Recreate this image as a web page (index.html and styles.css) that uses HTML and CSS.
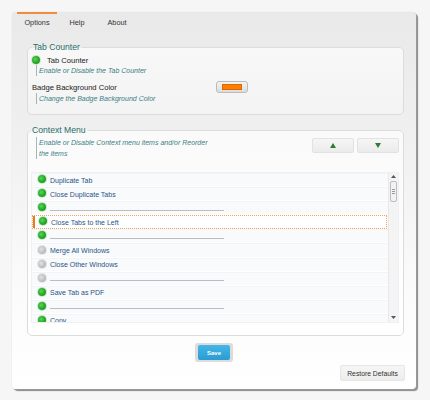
FILE: index.html
```html
<!DOCTYPE html>
<html>
<head>
<meta charset="utf-8">
<link rel="stylesheet" href="styles.css">
</head>
<body>
<div class="panel">
  <div class="tabs">
    <div class="tab active">Options</div>
    <div class="tab">Help</div>
    <div class="tab">About</div>
  </div>

  <fieldset class="group g1">
    <legend>Tab Counter</legend>
    <div class="opt"><span class="dot on"></span><span class="opt-label">Tab Counter</span></div>
    <div class="desc">Enable or Disable the Tab Counter</div>
    <div class="badge-row">
      <div class="badge-text">
        <div class="label">Badge Background Color</div>
        <div class="desc">Change the Badge Background Color</div>
      </div>
      <div class="swatch"><span class="swatch-fill"></span></div>
    </div>
  </fieldset>

  <fieldset class="group g2">
    <legend>Context Menu</legend>
    <div class="cm-head">
      <div class="desc wide">Enable or Disable Context menu items and/or Reorder the items</div>
      <div class="arrows">
        <button class="arrow"><svg width="6" height="5" viewBox="0 0 6 5"><polygon points="3,0 6,5 0,5" fill="#2e7d32"/></svg></button>
        <button class="arrow"><svg width="6" height="5" viewBox="0 0 6 5"><polygon points="0,0 6,0 3,5" fill="#2e7d32"/></svg></button>
      </div>
    </div>
    <div class="listbox">
      <ul class="list">
        <li class="row"><span class="dot on"></span><span class="item">Duplicate Tab</span></li>
        <li class="row"><span class="dot on"></span><span class="item">Close Duplicate Tabs</span></li>
        <li class="row sep"><span class="dot on"></span><span class="rule"></span></li>
        <li class="row selected"><span class="dot on"></span><span class="item">Close Tabs to the Left</span></li>
        <li class="row sep"><span class="dot on"></span><span class="rule"></span></li>
        <li class="row"><span class="dot off"></span><span class="item">Merge All Windows</span></li>
        <li class="row"><span class="dot off"></span><span class="item">Close Other Windows</span></li>
        <li class="row sep"><span class="dot off"></span><span class="rule"></span></li>
        <li class="row"><span class="dot on"></span><span class="item">Save Tab as PDF</span></li>
        <li class="row sep"><span class="dot on"></span><span class="rule"></span></li>
        <li class="row"><span class="dot on"></span><span class="item">Copy</span></li>
      </ul>
      <div class="scrollbar">
        <svg class="sb-arrow" width="5" height="3" viewBox="0 0 5 3"><polygon points="2.5,0 5,3 0,3" fill="#555"/></svg>
        <div class="thumb"><span></span><span></span><span></span></div>
        <div class="track"></div>
        <svg class="sb-arrow" width="5" height="3" viewBox="0 0 5 3"><polygon points="0,0 5,0 2.5,3" fill="#555"/></svg>
      </div>
    </div>
  </fieldset>

  <div class="save-wrap"><button class="save"><span class="save-inner">Save</span></button></div>
  <div class="restore-wrap"><button class="restore">Restore Defaults</button></div>
</div>
</body>
</html>
```

FILE: styles.css
```css
* { box-sizing: border-box; }
html, body { margin: 0; padding: 0; }
body {
  background: #f6f6f6;
  font-family: "Liberation Sans", Arial, sans-serif;
  width: 430px;
  height: 400px;
  overflow: hidden;
}
.panel {
  margin: 12px 0 0 12px;
  width: 404px;
  height: 377px;
  border-radius: 4px;
  background: linear-gradient(to bottom, #e9e9e9 0%, #efefef 30%, #fbfbfb 75%, #ffffff 100%);
  box-shadow: 1px 1px 0 #999, 2px 2px 1px #888, 0 0 1px #ccc;
  display: flex;
  flex-direction: column;
}
.tabs {
  display: flex;
  height: 20px;
  padding-left: 5px;
}
.tab {
  width: 40px;
  font-size: 7.3px;
  color: #333;
  text-align: center;
  line-height: 18px;
  border-top: 2px solid transparent;
}
.tab.active { border-top-color: #f08a3c; }

.group {
  margin: 10px 12px 0 15px;
  border: 1px solid #dcdcdc;
  border-radius: 5px;
  padding: 0 4px 0 4px;
  min-width: 0;
}
.group legend {
  font-size: 8.6px;
  line-height: 10px;
  color: #1f6e6a;
  padding: 0 2px 0 1px;
  margin-left: 0;
}
.g1 {
  height: 73px;
  background: linear-gradient(to bottom, #f8f8f8, #f3f3f3);
}
.opt {
  display: flex;
  align-items: center;
  height: 10px;
  margin-top: 3px;
}
.opt-label {
  font-size: 7.6px;
  color: #222;
  margin-left: 7px;
}
.dot {
  width: 8px;
  height: 8px;
  border-radius: 50%;
  flex: none;
  display: inline-block;
}
.dot.on {
  background: radial-gradient(circle at 40% 40%, #5fd35f 0%, #21a821 55%, #198c19 100%);
  box-shadow: 0 0 0 1px #c8e6c8;
}
.dot.off {
  background: radial-gradient(circle at 40% 40%, #e2e2e2 0%, #bdbdbd 60%, #a8a8a8 100%);
  box-shadow: 0 0 0 1px #e4e4e4;
}
.desc {
  font-size: 7px;
  font-style: italic;
  color: #3b7f84;
  line-height: 11px;
  border-left: 1px solid #9bb;
  padding-left: 2px;
  margin-left: 4px;
}
.badge-row {
  display: flex;
  align-items: flex-start;
  margin-top: 6px;
}
.badge-text { width: 184px; flex: none; }
.label {
  font-size: 7.6px;
  color: #222;
  line-height: 11px;
}
.swatch {
  margin-top: -1px;
  width: 32px;
  height: 12px;
  border: 1px solid #bbb;
  border-radius: 3px;
  background: linear-gradient(to bottom, #f4f4f4, #dcdcdc);
  padding: 2px 5px;
}
.swatch-fill {
  display: block;
  height: 100%;
  background: #ff7d00;
  border: 1px solid #d96a00;
}

.g2 {
  margin-top: 10px;
  height: 211px;
  background: linear-gradient(to bottom, #fafafa, #ffffff);
  padding-right: 4px;
  padding-left: 3px;
}
.cm-head {
  display: flex;
  justify-content: space-between;
  align-items: flex-start;
  margin-top: 2px;
}
.desc.wide {
  width: 180px;
  margin-left: 5px;
}
.arrows {
  display: flex;
  gap: 3px;
  margin-top: 1px;
}
.arrow {
  width: 42px;
  height: 15px;
  border: 1px solid #e2e2e2;
  border-radius: 2px;
  background: linear-gradient(to bottom, #f6f6f6, #ebebeb);
  padding: 0;
  display: flex;
  align-items: center;
  justify-content: center;
}
.listbox {
  margin-top: 13px;
  height: 151px;
  display: flex;
  background: #f8fafc;
  border: 1px solid #eef0f2;
  overflow: hidden;
}
.list {
  list-style: none;
  margin: 0;
  padding: 0;
  flex: 1;
  overflow: hidden;
}
.row {
  height: 14.1px;
  display: flex;
  align-items: center;
  padding-left: 6px;
  border-bottom: 1px solid #fff;
  border-top: 1px solid #f2f5f8;
}
.row .dot { margin-top: -2px; }
.item {
  font-size: 7px;
  color: #2d5286;
  margin-left: 4px;
}
.rule {
  display: block;
  width: 174px;
  height: 1px;
  background: #b9bcc0;
  margin-left: 4px;
  margin-top: 4px;
}
.row.selected {
  border: 1px dotted #efa35a;
  box-shadow: inset 2px 0 0 #e57d22;
  background: #fff;
  margin-right: 1px;
}
.scrollbar {
  width: 10px;
  flex: none;
  display: flex;
  flex-direction: column;
  align-items: center;
  padding: 2px 0 3px;
  background: #f4f4f4;
  border-left: 1px solid #e8e8e8;
}
.sb-arrow { flex: none; }
.thumb {
  margin-top: 3px;
  width: 7px;
  height: 21px;
  border: 1px solid #bdbdbd;
  border-radius: 2px;
  background: #f2f2f2;
  display: flex;
  flex-direction: column;
  justify-content: center;
  align-items: center;
  gap: 1px;
}
.thumb span { width: 3px; height: 1px; background: #999; display: block; }
.track { flex: 1; }

.save-wrap {
  display: flex;
  justify-content: center;
  margin-top: 7px;
}
.save {
  width: 38px;
  height: 19px;
  padding: 2px 3px;
  border: none;
  border-radius: 3px;
  background: #dcdcdc;
  display: flex;
}
.save-inner {
  flex: 1;
  display: flex;
  align-items: center;
  justify-content: center;
  background: linear-gradient(to bottom, #45b6e6, #2a9cd2);
  border-radius: 2px;
  color: #fff;
  font-weight: bold;
  font-size: 6px;
  font-family: "Liberation Sans", Arial, sans-serif;
}
.restore-wrap {
  display: flex;
  justify-content: flex-end;
  margin-top: 3px;
  padding-right: 11px;
}
.restore {
  width: 65px;
  height: 16px;
  padding: 0;
  border: 1px solid #e6e6e6;
  border-radius: 2px;
  background: linear-gradient(to bottom, #f6f6f6, #ededed);
  font-family: "Liberation Sans", Arial, sans-serif;
  font-size: 6.8px;
  color: #333;
}
```
